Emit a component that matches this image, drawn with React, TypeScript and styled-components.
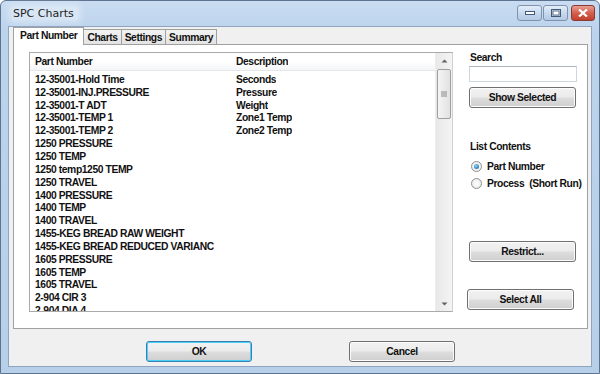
import { FC } from "react";
import styled, { createGlobalStyle, css } from "styled-components";

const GlobalStyle = createGlobalStyle`
  html, body {
    margin: 0;
    padding: 0;
    width: 600px;
    height: 374px;
    overflow: hidden;
    background: #ffffff;
  }
`;

const parts: [string, string][] = [
  ["12-35001-Hold Time", "Seconds"],
  ["12-35001-INJ.PRESSURE", "Pressure"],
  ["12-35001-T ADT", "Weight"],
  ["12-35001-TEMP 1", "Zone1 Temp"],
  ["12-35001-TEMP 2", "Zone2 Temp"],
  ["1250 PRESSURE", ""],
  ["1250 TEMP", ""],
  ["1250 temp1250 TEMP", ""],
  ["1250 TRAVEL", ""],
  ["1400 PRESSURE", ""],
  ["1400 TEMP", ""],
  ["1400 TRAVEL", ""],
  ["1455-KEG BREAD RAW WEIGHT", ""],
  ["1455-KEG BREAD REDUCED VARIANC", ""],
  ["1605 PRESSURE", ""],
  ["1605 TEMP", ""],
  ["1605 TRAVEL", ""],
  ["2-904 CIR 3", ""],
  ["2-904 DIA 4", ""],
];

const uiFont = css`
  font-family: "Liberation Sans", Arial, sans-serif;
  font-size: 10.3px;
  letter-spacing: -0.4px;
  font-weight: bold;
  color: #111;
`;

// Window frame
const Window = styled.div`
  width: 600px;
  height: 374px;
  box-sizing: border-box;
  border: 1px solid #5d7490;
  border-radius: 6px 6px 0 0;
  background: linear-gradient(to bottom, #c9dcf1 0px, #bcd3ec 30px, #b8cfe9 100%);
  display: flex;
  flex-direction: column;
`;

const TitleBar = styled.div`
  height: 25px;
  display: flex;
  align-items: flex-start;
  justify-content: space-between;
  padding: 0 4px 0 11px;
`;

const Title = styled.span`
  font-family: "DejaVu Sans", sans-serif;
  font-size: 11px;
  color: #1e1e1e;
  margin-top: 6px;
  padding: 0 4px 0 1px;
  background: rgba(255, 255, 255, 0.35);
  box-shadow: 0 0 6px 3px rgba(255, 255, 255, 0.35);
`;

const CaptionButtons = styled.div`
  display: flex;
  margin-top: 4px;
  gap: 1px;
`;

const CaptionButton = styled.div<{ $close?: boolean }>`
  width: ${({ $close }) => ($close ? 22 : 23)}px;
  height: 14px;
  border: 1px solid ${({ $close }) => ($close ? "#8a3a34" : "#7f93ad")};
  border-radius: 3px;
  display: flex;
  align-items: center;
  justify-content: center;
  background: ${({ $close }) =>
    $close
      ? "linear-gradient(to bottom, #e8a093 0%, #d4604e 50%, #c3402c 100%)"
      : "linear-gradient(to bottom, #e3edf8 0%, #c8d9ee 50%, #b4c9e4 100%)"};
  margin-left: ${({ $close }) => ($close ? 2 : 0)}px;
`;

const Client = styled.div`
  flex: 1;
  margin: 0 7px 6px 7px;
  background: #f0f0f0;
  border: 1px solid #8ea5c2;
  display: flex;
  flex-direction: column;
`;

// Tabs
const TabStrip = styled.div`
  display: flex;
  align-items: flex-end;
  height: 17px;
  padding: 0 0 0 5px;
`;

const Tab = styled.div<{ $active?: boolean }>`
  ${uiFont};
  box-sizing: border-box;
  height: 15px;
  padding: 0 ${({ $active }) => ($active ? 6 : 3)}px;
  display: flex;
  align-items: center;
  border: 1px solid #a0a0a0;
  border-bottom: none;
  margin-left: -1px;
  position: relative;
  z-index: ${({ $active }) => ($active ? 2 : 1)};
  background: ${({ $active }) =>
    $active ? "#ffffff" : "linear-gradient(to bottom, #f2f2f2, #e3e3e3)"};
  ${({ $active }) =>
    $active &&
    css`
      margin-bottom: -1px;
      height: 18px;
      padding-bottom: 2px;
    `}
`;

const TabPage = styled.div`
  margin: 0 3px 0 4px;
  height: 285px;
  box-sizing: border-box;
  border: 1px solid #a0a0a0;
  background: #ffffff;
  display: flex;
  padding: 7px 0 0 15px;
`;

// List view
const ListView = styled.div`
  width: 424px;
  height: 260px;
  box-sizing: border-box;
  border: 1px solid #a9a9a9;
  border-right: 1px solid #d0d0d0;
  display: flex;
  background: #fff;
`;

const ListBody = styled.div`
  flex: 1;
  overflow: hidden;
`;

const HeaderRow = styled.div`
  display: flex;
  height: 17px;
  align-items: center;
  background: linear-gradient(to bottom, #ffffff 0%, #ffffff 50%, #f4f5f7 100%);
  border-bottom: 1px solid #e4e6ea;
  margin-bottom: 2px;
`;

const Row = styled.div`
  display: flex;
  height: 12.85px;
  align-items: center;
`;

const Cell = styled.div<{ $w?: number }>`
  ${uiFont};
  white-space: nowrap;
  overflow: hidden;
  width: ${({ $w }) => ($w ? `${$w}px` : "auto")};
  padding-left: 5px;
  box-sizing: border-box;
  line-height: 13px;
`;

const ScrollBar = styled.div`
  width: 16px;
  background: linear-gradient(to right, #e8e8e8, #f4f4f4);
  display: flex;
  flex-direction: column;
  border-left: 1px solid #ececec;
`;

const ScrollArrow = styled.div`
  height: 15px;
  display: flex;
  align-items: center;
  justify-content: center;
`;

const ScrollTrack = styled.div`
  flex: 1;
  padding: 1px 1px;
`;

const Thumb = styled.div`
  height: 50px;
  box-sizing: border-box;
  border: 1px solid #9e9e9e;
  border-radius: 2px;
  background: linear-gradient(to right, #f4f4f4, #e2e2e2);
  display: flex;
  align-items: center;
  justify-content: center;
`;

// Right side panel
const Side = styled.div`
  display: flex;
  flex-direction: column;
  padding-left: 16px;
  width: 112px;
`;

const Label = styled.div<{ $top?: number }>`
  ${uiFont};
  margin-top: ${({ $top }) => $top ?? 0}px;
  padding-left: 1px;
  line-height: 13px;
`;

const SearchBox = styled.div`
  width: 108px;
  height: 16px;
  box-sizing: border-box;
  margin-top: 2px;
  border: 1px solid #cfd5dd;
  border-top-color: #aeb6c0;
  background: #fff;
`;

const Button = styled.div<{ $w?: number; $top?: number; $left?: number; $focus?: boolean }>`
  ${uiFont};
  width: ${({ $w }) => $w ?? 107}px;
  height: 21px;
  box-sizing: border-box;
  margin-top: ${({ $top }) => $top ?? 0}px;
  margin-left: ${({ $left }) => $left ?? 0}px;
  border: 1px solid ${({ $focus }) => ($focus ? "#3c7fb1" : "#707070")};
  border-radius: 3px;
  background: linear-gradient(to bottom, #f2f2f2 0%, #ebebeb 48%, #dddddd 52%, #cfcfcf 100%);
  box-shadow: inset 0 0 0 1px ${({ $focus }) => ($focus ? "#48d1f8" : "#fcfcfc")};
  display: flex;
  align-items: center;
  justify-content: center;
`;

const RadioRow = styled.div<{ $top?: number }>`
  display: flex;
  align-items: center;
  margin-top: ${({ $top }) => $top ?? 0}px;
  padding-left: 2px;
  gap: 5px;
`;

const RadioDot = styled.div<{ $checked?: boolean }>`
  flex-shrink: 0;
  width: 11px;
  height: 11px;
  box-sizing: border-box;
  border-radius: 50%;
  border: 1px solid #8e8f8f;
  background: radial-gradient(circle, #ffffff 0%, #e6e6e6 100%);
  display: flex;
  align-items: center;
  justify-content: center;
  &::after {
    content: "";
    display: ${({ $checked }) => ($checked ? "block" : "none")};
    width: 5px;
    height: 5px;
    border-radius: 50%;
    background: radial-gradient(circle at 40% 35%, #8fd4f4 0%, #1f6fb0 80%);
  }
`;

const RadioText = styled.span`
  ${uiFont};
  white-space: pre;
`;

const Footer = styled.div`
  display: flex;
  padding-left: 137px;
  margin-top: 12px;
  gap: 97px;
`;

const App: FC = () => {
  return (
    <>
      <GlobalStyle />
      <Window>
        <TitleBar>
          <Title>SPC Charts</Title>
          <CaptionButtons>
            <CaptionButton>
              <svg width="10" height="4">
                <rect x="0.5" y="0.5" width="9" height="3" fill="#fff" stroke="#435a78" />
              </svg>
            </CaptionButton>
            <CaptionButton>
              <svg width="10" height="8">
                <rect x="0.5" y="0.5" width="9" height="7" fill="none" stroke="#435a78" />
                <rect x="2" y="2" width="6" height="4" fill="#fff" stroke="#435a78" strokeWidth="0.8" />
              </svg>
            </CaptionButton>
            <CaptionButton $close>
              <svg width="10" height="8">
                <path d="M1 0.5 L9 7.5 M9 0.5 L1 7.5" stroke="#fff" strokeWidth="2.2" />
              </svg>
            </CaptionButton>
          </CaptionButtons>
        </TitleBar>
        <Client>
          <TabStrip>
            <Tab $active>Part Number</Tab>
            <Tab>Charts</Tab>
            <Tab>Settings</Tab>
            <Tab>Summary</Tab>
          </TabStrip>
          <TabPage>
            <ListView>
              <ListBody>
                <HeaderRow>
                  <Cell $w={201}>Part Number</Cell>
                  <Cell>Description</Cell>
                </HeaderRow>
                {parts.map(([name, desc], i) => (
                  <Row key={i}>
                    <Cell $w={201}>{name}</Cell>
                    <Cell>{desc}</Cell>
                  </Row>
                ))}
              </ListBody>
              <ScrollBar>
                <ScrollArrow>
                  <svg width="7" height="4">
                    <path d="M0.5 3.5 L3.5 0.5 L6.5 3.5 Z" fill="#606060" />
                  </svg>
                </ScrollArrow>
                <ScrollTrack>
                  <Thumb>
                    <svg width="6" height="6">
                      <path d="M0 1 H6 M0 3 H6 M0 5 H6" stroke="#8a8a8a" strokeWidth="1" />
                    </svg>
                  </Thumb>
                </ScrollTrack>
                <ScrollArrow>
                  <svg width="7" height="4">
                    <path d="M0.5 0.5 L3.5 3.5 L6.5 0.5 Z" fill="#606060" />
                  </svg>
                </ScrollArrow>
              </ScrollBar>
            </ListView>
            <Side>
              <Label $top={-1}>Search</Label>
              <SearchBox />
              <Button $top={5}>Show Selected</Button>
              <Label $top={32}>List Contents</Label>
              <RadioRow $top={8}>
                <RadioDot $checked />
                <RadioText>Part Number</RadioText>
              </RadioRow>
              <RadioRow $top={6}>
                <RadioDot />
                <RadioText>Process  (Short Run)</RadioText>
              </RadioRow>
              <Button $top={52}>Restrict...</Button>
              <Button $top={27} $left={-2}>Select All</Button>
            </Side>
          </TabPage>
          <Footer>
            <Button $w={106} $focus>OK</Button>
            <Button $w={106}>Cancel</Button>
          </Footer>
        </Client>
      </Window>
    </>
  );
};

export default App;
